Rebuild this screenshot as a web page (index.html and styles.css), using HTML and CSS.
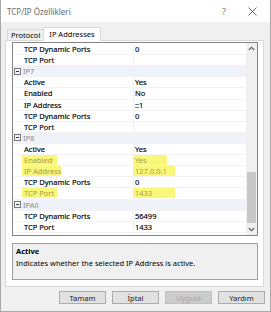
FILE: index.html
```html
<!DOCTYPE html>
<html lang="tr">
<head>
    <meta charset="UTF-8">
    <title>TCP/IP Özellikleri</title>
    <link rel="stylesheet" href="styles.css">
</head>
<body>
    <div class="window">
        <div class="titlebar">
            <span class="title">TCP/IP Özellikleri</span>
            <span class="help">?</span>
            <span class="close">
                <svg width="9" height="9" viewBox="0 0 9 9"><path d="M0.5 0.5L8.5 8.5M8.5 0.5L0.5 8.5" stroke="#5a5a5a" stroke-width="0.9"/></svg>
            </span>
        </div>

        <div class="content">
            <div class="tabs">
                <div class="tab">Protocol</div>
                <div class="tab active">IP Addresses</div>
            </div>

            <div class="panel">
                <div class="grid">
                    <div class="rows">
                        <div class="row"><span class="gutter"></span><span class="name">TCP Dynamic Ports</span><span class="value">0</span></div>
                        <div class="row"><span class="gutter"></span><span class="name">TCP Port</span><span class="value"></span></div>
                        <div class="row category"><span class="gutter"><i class="toggle"></i></span><span class="cat-name">IP7</span></div>
                        <div class="row"><span class="gutter"></span><span class="name">Active</span><span class="value">Yes</span></div>
                        <div class="row"><span class="gutter"></span><span class="name">Enabled</span><span class="value">No</span></div>
                        <div class="row"><span class="gutter"></span><span class="name">IP Address</span><span class="value">::1</span></div>
                        <div class="row"><span class="gutter"></span><span class="name">TCP Dynamic Ports</span><span class="value">0</span></div>
                        <div class="row"><span class="gutter"></span><span class="name">TCP Port</span><span class="value"></span></div>
                        <div class="row category"><span class="gutter"><i class="toggle"></i></span><span class="cat-name">IP8</span></div>
                        <div class="row"><span class="gutter"></span><span class="name">Active</span><span class="value">Yes</span></div>
                        <div class="row marked"><span class="gutter"></span><span class="name"><mark class="hl">Enabled</mark></span><span class="value"><mark class="hl hl-short">Yes</mark></span></div>
                        <div class="row marked"><span class="gutter"></span><span class="name"><mark class="hl hl-wide">IP Address</mark></span><span class="value"><mark class="hl">127.0.0.1</mark></span></div>
                        <div class="row"><span class="gutter"></span><span class="name">TCP Dynamic Ports</span><span class="value">0</span></div>
                        <div class="row marked"><span class="gutter"></span><span class="name"><mark class="hl">TCP Port</mark></span><span class="value"><mark class="hl">1433</mark></span></div>
                        <div class="row category"><span class="gutter"><i class="toggle"></i></span><span class="cat-name">IPAll</span></div>
                        <div class="row"><span class="gutter"></span><span class="name">TCP Dynamic Ports</span><span class="value">56499</span></div>
                        <div class="row"><span class="gutter"></span><span class="name">TCP Port</span><span class="value">1433</span></div>
                    </div>
                    <div class="scrollbar">
                        <svg class="arrow" width="7" height="5" viewBox="0 0 7 5"><path d="M0.8 4L3.5 1.3L6.2 4" fill="none" stroke="#606060" stroke-width="1.1"/></svg>
                        <div class="track"><div class="thumb"></div></div>
                        <svg class="arrow" width="7" height="5" viewBox="0 0 7 5"><path d="M0.8 1L3.5 3.7L6.2 1" fill="none" stroke="#606060" stroke-width="1.1"/></svg>
                    </div>
                </div>

                <div class="description">
                    <div class="desc-title">Active</div>
                    <div class="desc-text">Indicates whether the selected IP Address is active.</div>
                </div>
            </div>

            <div class="buttons">
                <button>Tamam</button>
                <button>İptal</button>
                <button disabled>Uygula</button>
                <button>Yardım</button>
            </div>
        </div>
    </div>
</body>
</html>
```

FILE: styles.css
```css
body {
    margin: 0;
    font-family: "Noto Sans", "Open Sans", sans-serif;
    font-size: 7.5px;
    color: #000000;
    background: #ffffff;
}

/* dialog frame */
.window {
    width: 271px;
    height: 312px;
    box-sizing: border-box;
    border: 1px solid #a8a8a8;
    border-top: none;
    background-color: #f0f0f0;
    display: flex;
    flex-direction: column;
}

.titlebar {
    height: 22px;
    background-color: #ffffff;
    display: flex;
    align-items: center;
    padding: 0 6px;
    flex-shrink: 0;
}

.title {
    flex: 1;
    color: #6b6b6b;
    font-size: 8px;
}

.help {
    color: #7a7a7a;
    font-size: 9px;
    margin-right: 22px;
}

.close {
    display: flex;
    margin-right: 7px;
}

.content {
    flex: 1;
    display: flex;
    flex-direction: column;
    padding: 4px 4px 0 4px;
}

/* tabs */
.tabs {
    display: flex;
    align-items: flex-end;
    height: 14px;
    padding-left: 2px;
}

.tab {
    height: 10px;
    line-height: 10px;
    padding: 0 3px;
    border: 1px solid #d9d9d9;
    border-bottom: none;
    background-color: #f0f0f0;
    font-size: 7.5px;
}

.tab.active {
    height: 13px;
    line-height: 13px;
    padding: 0 5px;
    margin-left: -1px;
    background-color: #ffffff;
    position: relative;
    top: 1px;
}

.panel {
    width: 259px;
    height: 247px;
    box-sizing: border-box;
    border: 1px solid #d9d9d9;
    background-color: #ffffff;
    padding: 1px 5px 6px 6px;
    display: flex;
    flex-direction: column;
    gap: 7px;
}

/* property grid */
.grid {
    height: 194px;
    box-sizing: border-box;
    border: 1px solid #858585;
    display: flex;
    background-color: #ffffff;
}

.rows {
    flex: 1;
    padding-top: 1px;
}

.row {
    display: grid;
    grid-template-columns: 9px 112px 1fr;
    height: 11.12px;
    box-sizing: border-box;
    border-bottom: 1px solid #f3f3f3;
    align-items: center;
    white-space: nowrap;
    -webkit-text-stroke: 0.15px #000000;
}

.name {
    padding-left: 2px;
    height: 100%;
    display: flex;
    align-items: center;
    border-right: 1px solid #f0f0f0;
}

.value {
    padding-left: 1px;
    height: 100%;
    display: flex;
    align-items: center;
}

.category {
    background-color: #eff3f9;
    grid-template-columns: 9px 1fr;
    -webkit-text-stroke: 0;
}

.cat-name {
    padding-left: 1px;
    color: #8a8a8a;
}

.toggle {
    display: block;
    width: 5px;
    height: 5px;
    margin-left: 1px;
    border: 1px solid #7a7a7a;
    position: relative;
}

.toggle::after {
    content: "";
    position: absolute;
    left: 1px;
    right: 1px;
    top: 2px;
    height: 1px;
    background-color: #3a3a3a;
}

/* hand drawn marker highlight */
.marked {
    -webkit-text-stroke: 0;
}

.hl {
    background-color: #f9f77a;
    color: #a49c48;
    height: 10px;
    display: inline-flex;
    align-items: center;
    min-width: 33px;
    padding-left: 2px;
    margin-left: -2px;
}

.hl-wide {
    min-width: 37px;
}

.value .hl {
    min-width: 40px;
}

.value .hl.hl-short {
    min-width: 32px;
}

.scrollbar {
    width: 11px;
    background-color: #f0f0f0;
    display: flex;
    flex-direction: column;
    align-items: center;
}

.arrow {
    margin: 3px 0;
    flex-shrink: 0;
}

.track {
    flex: 1;
    width: 100%;
    position: relative;
}

.thumb {
    position: absolute;
    left: 1px;
    right: 1px;
    top: 118px;
    bottom: 1px;
    background-color: #c8c8c8;
}

/* description box */
.description {
    height: 37px;
    box-sizing: border-box;
    border: 1px solid #a0a0a0;
    background-color: #f0f0f0;
    padding: 2px 3px;
}

.desc-title {
    font-weight: bold;
    line-height: 10px;
}

.desc-text {
    margin-top: 2px;
    line-height: 10px;
}

/* dialog buttons */
.buttons {
    display: flex;
    justify-content: flex-end;
    gap: 6px;
    padding-top: 4px;
    padding-right: 1px;
}

button {
    width: 47px;
    height: 13px;
    padding: 0;
    font-family: inherit;
    font-size: 7.5px;
    color: #1a1a1a;
    background-color: #e1e1e1;
    border: 1px solid #adadad;
}

button:disabled {
    color: #a3a3a3;
    background-color: #cccccc;
    border-color: #bfbfbf;
}
```
